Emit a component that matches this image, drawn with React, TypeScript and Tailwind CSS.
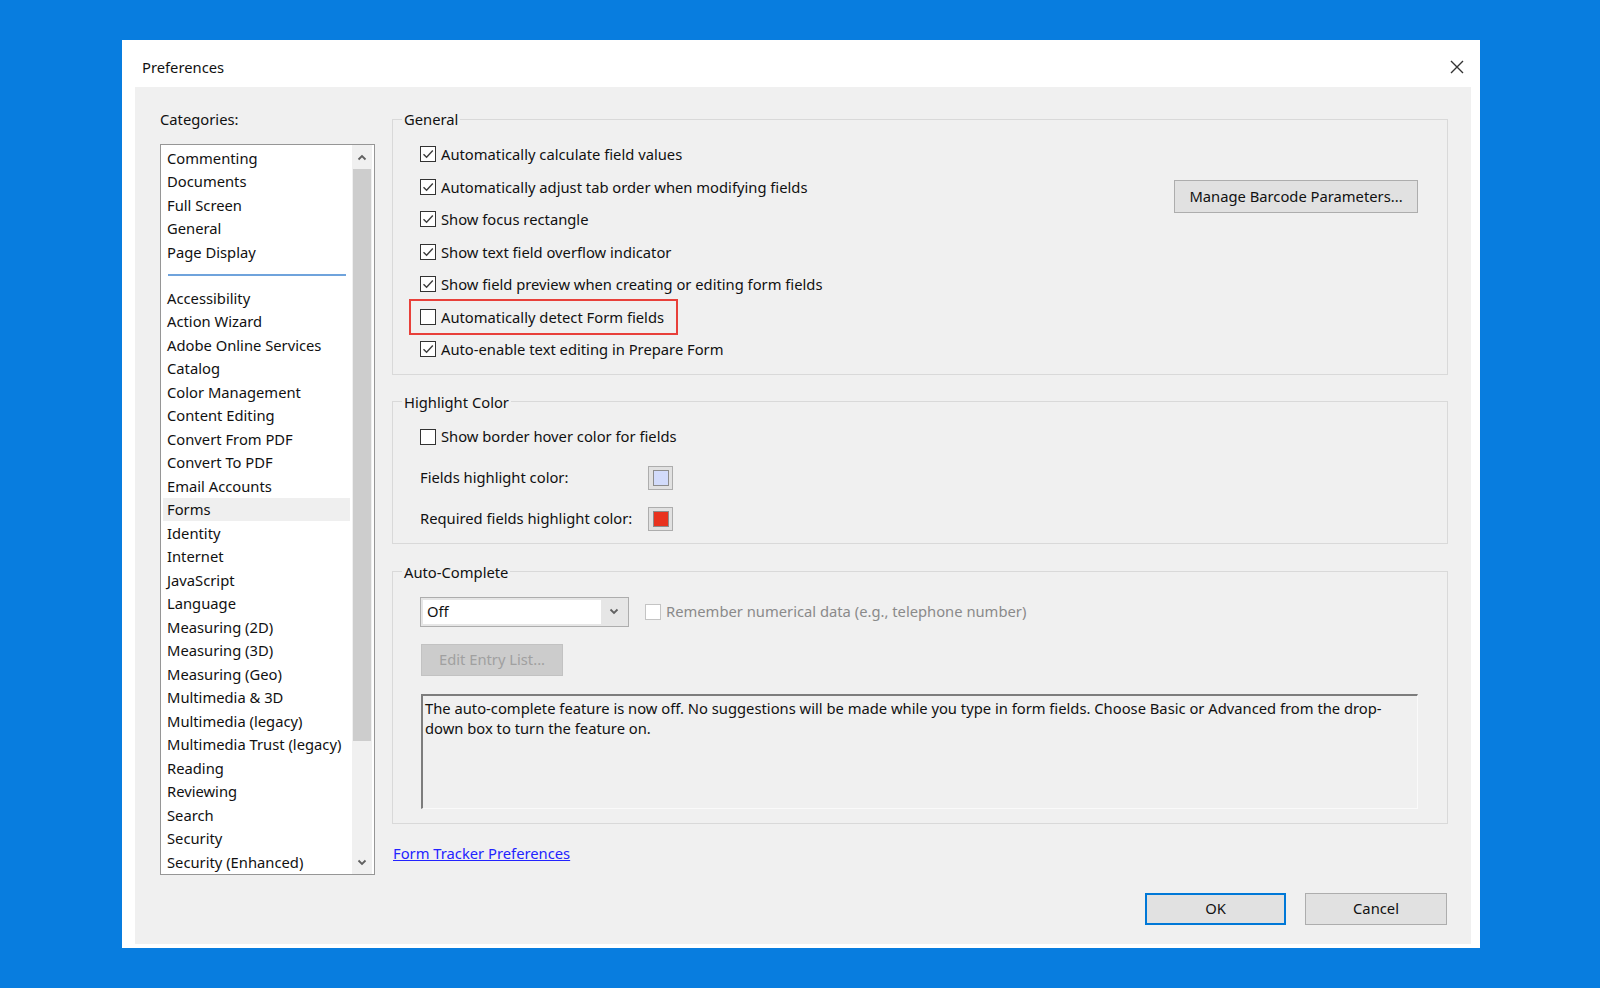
const topCategories = ["Commenting", "Documents", "Full Screen", "General", "Page Display"];

const categories = [
  "Accessibility",
  "Action Wizard",
  "Adobe Online Services",
  "Catalog",
  "Color Management",
  "Content Editing",
  "Convert From PDF",
  "Convert To PDF",
  "Email Accounts",
  "Forms",
  "Identity",
  "Internet",
  "JavaScript",
  "Language",
  "Measuring (2D)",
  "Measuring (3D)",
  "Measuring (Geo)",
  "Multimedia & 3D",
  "Multimedia (legacy)",
  "Multimedia Trust (legacy)",
  "Reading",
  "Reviewing",
  "Search",
  "Security",
  "Security (Enhanced)",
];

const generalOptions = [
  { label: "Automatically calculate field values", checked: true },
  { label: "Automatically adjust tab order when modifying fields", checked: true },
  { label: "Show focus rectangle", checked: true },
  { label: "Show text field overflow indicator", checked: true },
  { label: "Show field preview when creating or editing form fields", checked: true },
  { label: "Automatically detect Form fields", checked: false, marked: true },
  { label: "Auto-enable text editing in Prepare Form", checked: true },
];

function Checkbox({ checked, disabled }: { checked?: boolean; disabled?: boolean }) {
  return (
    <span
      className={
        disabled
          ? "w-[16px] h-[16px] shrink-0 border border-[#c4c4c4] bg-white"
          : "w-[16px] h-[16px] shrink-0 border border-[#333333] bg-white flex items-center justify-center"
      }
    >
      {checked && (
        <svg width="14" height="14" viewBox="0 0 14 14">
          <polyline points="2.5,7.2 5.6,10.3 11.8,3.6" fill="none" stroke="#3c3c3c" strokeWidth="1.4" />
        </svg>
      )}
    </span>
  );
}

function Caret({ down }: { down?: boolean }) {
  return (
    <svg width="10" height="7" viewBox="0 0 10 7">
      <polyline
        points={down ? "1.5,1.5 5,5 8.5,1.5" : "1.5,5.5 5,2 8.5,5.5"}
        fill="none"
        stroke="#606060"
        strokeWidth="1.8"
      />
    </svg>
  );
}

function Swatch({ color }: { color: string }) {
  return (
    <span className="w-[25px] h-[24px] border border-[#adadad] bg-[#e1e1e1] flex items-center justify-center">
      <span className="w-[16px] h-[16px] border border-[#8c8c8c]" style={{ backgroundColor: color }} />
    </span>
  );
}

function Group({ title, className, children }: { title: string; className?: string; children: React.ReactNode }) {
  return (
    <fieldset className={"border border-[#d9d9d9] min-w-0 " + (className ?? "")}>
      <legend className="ml-[9px] px-[2px] leading-[20px]">{title}</legend>
      {children}
    </fieldset>
  );
}

export default function App() {
  return (
    <div className="h-[988px] w-full bg-[#087ddf] pt-[40px] font-['Noto_Sans',sans-serif] text-[#111111] text-[14.75px]">
      <div className="ml-[122px] w-[1358px] h-[908px] bg-white flex flex-col">
        {/* Title bar */}
        <div className="h-[47px] shrink-0 flex items-center justify-between pl-[20px] pr-[16px] pt-[6px]">
          <span className="leading-[20px]">Preferences</span>
          <svg width="14" height="14" viewBox="0 0 14 14">
            <path d="M1 1 L13 13 M13 1 L1 13" stroke="#333" strokeWidth="1.4" />
          </svg>
        </div>

        {/* Body */}
        <div className="ml-[13px] mr-[9px] h-[857px] bg-[#f0f0f0] flex pl-[25px] pt-[22px]">
          {/* Categories */}
          <div className="w-[215px] shrink-0 flex flex-col">
            <div className="leading-[20px]">Categories:</div>
            <div className="mt-[15px] h-[731px] border border-[#969696] bg-white flex">
              <div className="flex-1 px-[2px] pt-[1px]">
                {topCategories.map((c) => (
                  <div key={c} className="h-[23.5px] flex items-center pl-[4px] whitespace-nowrap">
                    {c}
                  </div>
                ))}
                <div className="h-[22.5px] flex items-center pl-[5px]">
                  <div className="w-[178px] h-[2px] bg-[#6fa3dc]" />
                </div>
                {categories.map((c) => (
                  <div
                    key={c}
                    className={
                      c === "Forms"
                        ? "h-[23.5px] flex items-center pl-[4px] whitespace-nowrap bg-[#efefef]"
                        : "h-[23.5px] flex items-center pl-[4px] whitespace-nowrap"
                    }
                  >
                    {c}
                  </div>
                ))}
              </div>
              <div className="w-[20px] mr-[2px] bg-[#f0f0f0] flex flex-col">
                <div className="h-[24px] flex items-center justify-center">
                  <Caret />
                </div>
                <div className="h-[572px] mx-[1px] bg-[#cdcdcd]" />
                <div className="flex-1" />
                <div className="h-[24px] flex items-center justify-center">
                  <Caret down />
                </div>
              </div>
            </div>
          </div>

          {/* Settings */}
          <div className="ml-[17px] w-[1056px] flex flex-col">
            <Group title="General" className="pt-[9px] pb-[8px]">
              <div className="flex justify-between">
                <div className="flex flex-col">
                  {generalOptions.map((o) => (
                    <div key={o.label} className="h-[32.5px] flex items-center pl-[27px]">
                      <div className="relative h-full flex items-center gap-[5px] whitespace-nowrap">
                        <Checkbox checked={o.checked} />
                        <span>{o.label}</span>
                        {o.marked && (
                          <span className="absolute -left-[11px] -right-[14px] -top-[2px] -bottom-[2px] border-2 border-[#e8403a]" />
                        )}
                      </div>
                    </div>
                  ))}
                </div>
                <button className="self-start mt-[42px] mr-[29px] w-[244px] h-[33px] border border-[#adadad] bg-[#e1e1e1]">
                  Manage Barcode Parameters...
                </button>
              </div>
            </Group>

            <Group title="Highlight Color" className="mt-[17px] pt-[9px] pb-[12px]">
              <div className="h-[32px] flex items-center pl-[27px] gap-[5px]">
                <Checkbox />
                <span>Show border hover color for fields</span>
              </div>
              <div className="mt-[13px] h-[24px] flex items-center pl-[27px]">
                <span className="w-[228px]">Fields highlight color:</span>
                <Swatch color="#d2dbfa" />
              </div>
              <div className="mt-[17px] h-[24px] flex items-center pl-[27px]">
                <span className="w-[228px]">Required fields highlight color:</span>
                <Swatch color="#e8321e" />
              </div>
            </Group>

            <Group title="Auto-Complete" className="mt-[18px] pt-[15px] pb-[14px]">
              <div className="flex items-center pl-[27px]">
                <div className="w-[209px] h-[30px] border border-[#adadad] bg-[#e6e6e6] flex p-[2px]">
                  <div className="flex-1 bg-white flex items-center pl-[4px]">Off</div>
                  <div className="w-[25px] flex items-center justify-center">
                    <Caret down />
                  </div>
                </div>
                <div className="ml-[16px] flex items-center gap-[5px] text-[#8a8a8a]">
                  <Checkbox disabled />
                  <span>Remember numerical data (e.g., telephone number)</span>
                </div>
              </div>
              <button className="mt-[17px] ml-[28px] w-[142px] h-[32px] border border-[#c2c2c2] bg-[#cccccc] text-[#a0a0a0]">
                Edit Entry List...
              </button>
              <div className="mt-[18px] ml-[28px] w-[997px] h-[115px] border-t-2 border-l-2 border-t-[#7d7d7d] border-l-[#7d7d7d] border-b border-r border-b-[#fafafa] border-r-[#fafafa] pl-[2px] pt-[2px] leading-[20px]">
                <div className="whitespace-nowrap">
                  The auto-complete feature is now off. No suggestions will be made while you type in form fields. Choose
                  Basic or Advanced from the drop-
                </div>
                <div className="whitespace-nowrap">down box to turn the feature on.</div>
              </div>
            </Group>

            <a href="#" className="mt-[19px] ml-[1px] self-start leading-[20px] text-[#2323ff] underline">
              Form Tracker Preferences
            </a>

            <div className="mt-[30px] flex justify-end gap-[19px] pr-[1px]">
              <button className="w-[141px] h-[32px] border-2 border-[#0078d7] bg-[#e1e1e1]">OK</button>
              <button className="w-[142px] h-[32px] border border-[#adadad] bg-[#e1e1e1]">Cancel</button>
            </div>
          </div>
        </div>
      </div>
    </div>
  );
}
